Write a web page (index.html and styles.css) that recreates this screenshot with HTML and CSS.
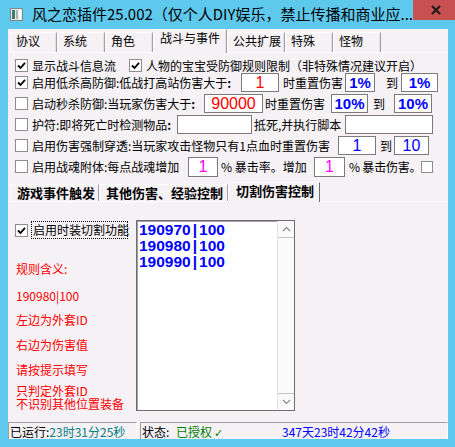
FILE: index.html
```html
<!DOCTYPE html>
<html>
<head>
<meta charset="utf-8">
<link rel="stylesheet" href="styles.css">
</head>
<body>
<div class="win">
  <div class="titlebar">
    <svg class="appicon" width="13" height="13" viewBox="0 0 13 13">
      <rect x="0.5" y="0.5" width="12" height="12" fill="#e8e8e8" stroke="#7d8a8a"/>
      <rect x="2" y="2" width="3" height="9" fill="#3f7f70"/>
      <rect x="6" y="2" width="2" height="9" fill="#a9b7b4"/>
      <rect x="9" y="2" width="2" height="9" fill="#ffffff"/>
    </svg>
    <div class="title">风之恋插件25.002（仅个人DIY娱乐，禁止传播和商业应...</div>
    <div class="close">
      <svg width="10" height="10" viewBox="0 0 10 10"><path d="M1 1 L9 9 M9 1 L1 9" stroke="#1a1a1a" stroke-width="2"/></svg>
    </div>
  </div>
  <div class="client">
    <div class="tabs">
      <div class="tab w47">协议</div>
      <div class="tab w48">系统</div>
      <div class="tab w48">角色</div>
      <div class="tab sel w74">战斗与事件</div>
      <div class="tab w58">公共扩展</div>
      <div class="tab w48">特殊</div>
      <div class="tab w48">怪物</div>
    </div>
    <div class="panel">
      <div class="row r1">
        <span class="cb"><svg viewBox="0 0 11 11"><path d="M2 5.5 L4.5 8 L9 2.8" fill="none" stroke="#000" stroke-width="1.8"/></svg></span>
        <span class="lbl r1a">显示战斗信息流</span>
        <span class="cb"><svg viewBox="0 0 11 11"><path d="M2 5.5 L4.5 8 L9 2.8" fill="none" stroke="#000" stroke-width="1.8"/></svg></span>
        <span class="lbl">人物的宝宝受防御规则限制（非特殊情况建议开启）</span>
      </div>
      <div class="row">
        <span class="cb"><svg viewBox="0 0 11 11"><path d="M2 5.5 L4.5 8 L9 2.8" fill="none" stroke="#000" stroke-width="1.8"/></svg></span>
        <span class="lbl r2a">启用低杀高防御:低战打高站伤害大于<b>:</b></span>
        <span class="in red r2i1">1</span>
        <span class="lbl r2b">时重置伤害</span>
        <span class="in blue bold r2i2">1%</span>
        <span class="lbl r2c">到</span>
        <span class="in blue bold r2i3">1%</span>
      </div>
      <div class="row">
        <span class="cb"></span>
        <span class="lbl r3a">启动秒杀防御:当玩家伤害大于<b>:</b></span>
        <span class="in red r3i1">90000</span>
        <span class="lbl r3b">时重置伤害</span>
        <span class="in blue bold r3i2">10%</span>
        <span class="lbl r3c">到</span>
        <span class="in blue bold r3i3">10%</span>
      </div>
      <div class="row">
        <span class="cb"></span>
        <span class="lbl r4a">护符:即将死亡时检测物品<b>:</b></span>
        <span class="in r4i1"></span>
        <span class="lbl r4b">抵死,并执行脚本</span>
        <span class="in r4i2"></span>
      </div>
      <div class="row">
        <span class="cb"></span>
        <span class="lbl r5a">启用伤害强制穿透:当玩家攻击怪物只有1点血时重置伤害</span>
        <span class="in blue r5i1">1</span>
        <span class="lbl r5b">到</span>
        <span class="in blue r5i2">10</span>
      </div>
      <div class="row">
        <span class="cb"></span>
        <span class="lbl r6a">启用战魂附体:每点战魂增加</span>
        <span class="in pink r6i1">1</span>
        <span class="lbl r6b">% 暴击率。增加</span>
        <span class="in pink r6i2">1</span>
        <span class="lbl r6c">% 暴击伤害。</span>
        <span class="cb small"></span>
      </div>

      <div class="subtabs">
        <div class="stab s89">游戏事件触发</div>
        <div class="stab s129">其他伤害、经验控制</div>
        <div class="stab ssel s92">切割伤害控制</div>
      </div>

      <div class="subpanel">
        <div class="leftcol">
          <div class="frow">
            <span class="cb"><svg viewBox="0 0 11 11"><path d="M2 5.5 L4.5 8 L9 2.8" fill="none" stroke="#000" stroke-width="1.8"/></svg></span>
            <span class="focus">启用时装切割功能</span>
          </div>
          <div class="rule g1">规则含义:</div>
          <div class="rule g2">190980|100</div>
          <div class="rule g3">左边为外套ID</div>
          <div class="rule g4">右边为伤害值</div>
          <div class="rule g5">请按提示填写</div>
          <div class="rule g6">只判定外套ID</div>
          <div class="rule g7">不识别其他位置装备</div>
        </div>
        <div class="memo">
          <div class="memotext">
            <div>190970<span class="bar">|</span>100</div>
            <div>190980<span class="bar">|</span>100</div>
            <div>190990<span class="bar">|</span>100</div>
          </div>
          <div class="vscroll">
            <div class="arrow up"><svg width="9" height="6" viewBox="0 0 9 6"><path d="M1 5 L4.5 1.5 L8 5" fill="none" stroke="#8a8a8a" stroke-width="1.2"/></svg></div>
            <div class="track"></div>
            <div class="arrow down"><svg width="9" height="6" viewBox="0 0 9 6"><path d="M1 1 L4.5 4.5 L8 1" fill="none" stroke="#8a8a8a" stroke-width="1.2"/></svg></div>
          </div>
        </div>
      </div>
    </div>
    <div class="status">
      <div class="sec sec1"><span>已运行:</span><span class="teal">23时31分25秒</span></div>
      <div class="sec sec2"><span class="st">状态:</span><span class="green auth">已授权<span class="tick">✓</span></span><span class="blue2">347天23时42分42秒</span></div>
    </div>
  </div>
</div>
</body>
</html>
```

FILE: styles.css
```css
* { box-sizing: border-box; }
html, body { margin: 0; padding: 0; }
body {
  width: 455px;
  height: 447px;
  overflow: hidden;
  background: #5fc9ed;
  font-family: "Noto Sans CJK SC", "Noto Sans", sans-serif;
  font-size: 12px;
  color: #000;
}
.win { width: 455px; height: 447px; }

.titlebar { height: 29px; display: flex; align-items: flex-start; }
.appicon { margin: 8px 0 0 10px; flex: none; }
.title { margin: 4px 0 0 9px; font-size: 15px; line-height: 20px; white-space: nowrap; color: #000; }
.close {
  margin-left: auto; margin-right: 6px; width: 45px; height: 20px; flex: none;
  background: #c75050; display: flex; align-items: center; justify-content: center;
}

.client {
  margin: 0 7px 0 8px; height: 410px; background: #f5f1f5;
  display: flex; flex-direction: column;
}

/* main tabs */
.tabs { height: 23px; display: flex; align-items: flex-end; padding-left: 2px; flex: none; }
.tab {
  height: 20px; line-height: 16px; padding-left: 5px;
  border-top: 1px solid #fff; border-left: 1px solid #fff; border-right: 1px solid #a0a0a0;
  box-shadow: inset -1px 0 0 #e3dfe3;
  white-space: nowrap;
}
.tab.sel {
  height: 24px; margin-bottom: -1px; padding-left: 6px; line-height: 16px;
  background: #f5f1f5; position: relative; z-index: 1;
}
.w47 { width: 47px; } .w48 { width: 48px; } .w58 { width: 58px; } .w74 { width: 74px; }

.panel { flex: 1; border-top: 1px solid #fff; display: flex; flex-direction: column; }

.row { display: flex; align-items: center; height: 19px; margin-top: 2px; padding-left: 7px; white-space: nowrap; }
.row.r1 { height: 16px; margin-top: 4px; }
.row.r1 + .row { margin-top: 0; }

.cb {
  width: 13px; height: 13px; flex: none; margin-right: 4px;
  border: 1px solid #8e8e8e; background: #fff; display: flex;
}
.cb svg { width: 11px; height: 11px; }
.cb.small { width: 12px; height: 12px; margin: 0; }
.lbl { flex: none; }
.lbl b { font-weight: bold; }
.r1a { width: 97px; }
.r2a { width: 209px; }
.r2b { width: 66px; padding-left: 4px; }
.r2c { width: 26px; padding-left: 11px; }
.r3a { width: 172px; }
.r3b { width: 68px; padding-left: 2px; }
.r3c { width: 26px; padding-left: 5px; }
.r4a { width: 145px; }
.r4b { width: 93px; padding-left: 2px; }
.r5a { width: 306px; }
.r5b { width: 18px; padding-left: 4px; }
.r6a { width: 156px; }
.r6b { width: 96px; padding-left: 3px; }
.r6c { width: 76px; padding-left: 4px; letter-spacing: -0.2px; }

.in {
  height: 19px; flex: none; background: #fff; border: 1px solid #7a7a7a;
  display: flex; align-items: center; justify-content: center;
  font-family: "Liberation Sans", Arial, sans-serif; font-size: 16px; line-height: 17px;
}
.in.bold { font-weight: bold; font-size: 15px; }
.red { color: #ff0000; }
.blue { color: #0000ff; }
.pink { color: #ff00ff; }
.r2i1 { width: 38px; } .r2i2 { width: 30px; } .r2i3 { width: 37px; }
.r3i1 { width: 59px; } .r3i2 { width: 37px; } .r3i3 { width: 38px; }
.r4i1 { width: 75px; } .r4i2 { width: 88px; }
.r5i1 { width: 38px; } .r5i2 { width: 35px; }
.r6i1 { width: 30px; height: 20px; } .r6i2 { width: 31px; height: 20px; }

/* sub tabs */
.subtabs {
  height: 20px; margin-top: 6px; display: flex; align-items: flex-end; padding-left: 2px; flex: none;
  border-bottom: 1px solid #fff;
}
.stab {
  height: 17px; line-height: 15px; padding-left: 6px; font-weight: bold; font-size: 13px;
  border-top: 1px solid #fff; border-left: 1px solid #fff; border-right: 1px solid #a0a0a0;
  white-space: nowrap; overflow: hidden;
}
.stab.ssel {
  height: 20px; margin-bottom: -1px; padding-left: 7px; line-height: 16px;
  background: #f5f1f5; position: relative; z-index: 1; border-right: 1px solid #6f6f6f;
}
.s89 { width: 89px; } .s129 { width: 129px; } .s92 { width: 92px; }

.subpanel { display: flex; flex: none; height: 216px; }
.leftcol { width: 128px; flex: none; display: flex; flex-direction: column; }
.frow { display: flex; align-items: center; margin-top: 19px; height: 18px; padding-left: 7px; }
.frow .cb { margin-right: 3px; }
.focus { border: 1px dotted #000; height: 18px; line-height: 16px; padding-left: 1px; width: 97px; white-space: nowrap; }

.rule { color: #ff0000; line-height: 12px; height: 12px; padding-left: 8px; white-space: nowrap; }
.g1 { margin-top: 24px; }
.g2 { margin-top: 15px; }
.g3 { margin-top: 12px; }
.g4 { margin-top: 13px; }
.g5 { margin-top: 13px; }
.g6 { margin-top: 9px; }
.g7 { margin-top: 1px; }

.memo {
  margin-top: 18px; width: 159px; height: 191px; flex: none;
  border: 1px solid #6e6e6e; box-shadow: inset 1px 1px 0 #a0a0a0;
  background: #fff; display: flex;
}
.memotext {
  flex: 1; padding: 1px 0 0 2px; color: #0000ff;
  font-family: "Liberation Sans", Arial, sans-serif; font-weight: bold; font-size: 15.5px; line-height: 16px;
  white-space: nowrap;
}
.bar { padding: 0 2px 0 2px; }
.vscroll { width: 17px; flex: none; display: flex; flex-direction: column; background: #fafafa; border-left: 1px solid #e4e4e4; }
.arrow { height: 17px; display: flex; align-items: center; justify-content: center; flex: none; }
.arrow.up { border-bottom: 1px solid #c8c8c8; }
.arrow.down { border-top: 1px solid #c8c8c8; }
.track { flex: 1; }

/* status bar */
.status { margin-top: auto; height: 17px; display: flex; gap: 3px; flex: none; margin-bottom: 0; }
.sec {
  height: 17px; border-top: 1px solid #a0a0a0; border-left: 1px solid #a0a0a0;
  border-right: 1px solid #fff; display: flex; align-items: center; white-space: nowrap;
  padding-left: 1px;
}
.sec1 { width: 129px; }
.sec2 { flex: 1; }
.teal { color: #008080; }
.green { color: #008000; }
.blue2 { color: #0000ff; }
.st { width: 34px; }
.auth { width: 106px; }
.tick { font-family: "DejaVu Sans", sans-serif; font-size: 11px; margin-left: 2px; }
```
